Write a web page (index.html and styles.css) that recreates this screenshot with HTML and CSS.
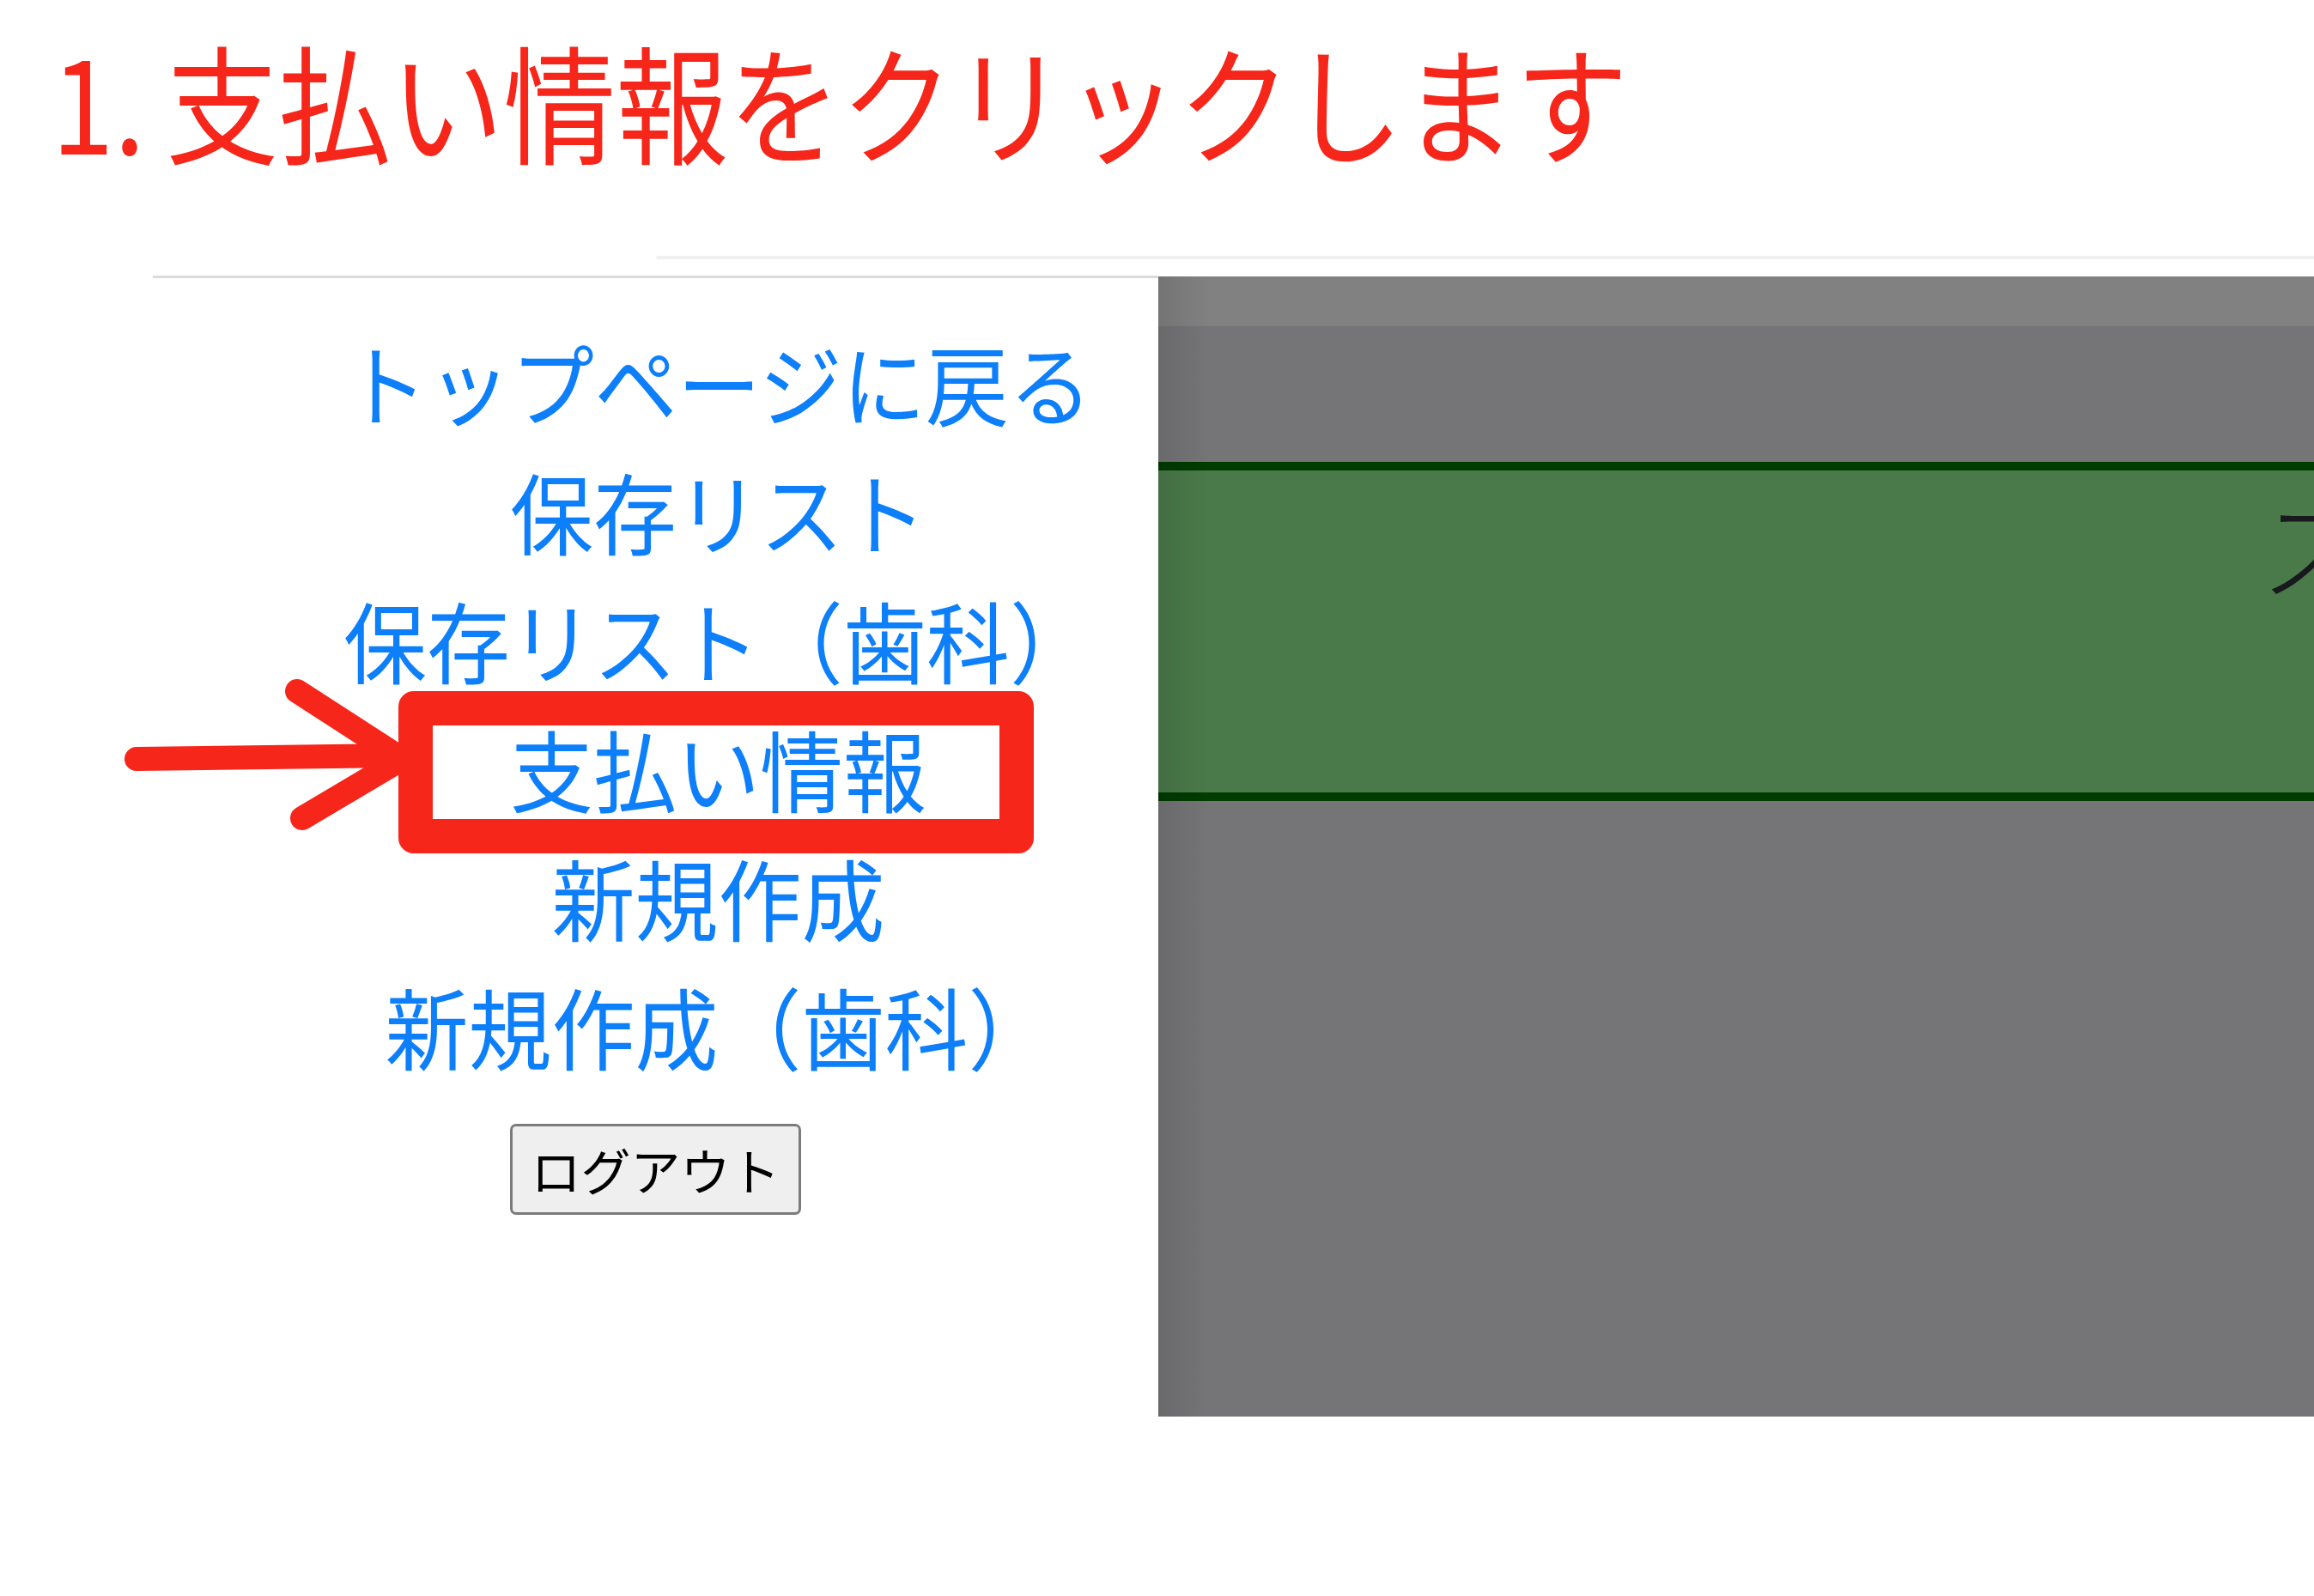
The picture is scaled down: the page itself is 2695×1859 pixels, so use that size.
FILE: index.html
```html
<!DOCTYPE html>
<html lang="ja">
<head>
<meta charset="utf-8">
<title>支払い情報</title>
<link rel="stylesheet" href="styles.css">
</head>
<body>
<h1 class="title"><span class="title-text"><span class="num">1.</span>支払い情報をクリックします</span></h1>
<div class="rule-top"></div>
<div class="app">
  <aside class="sidebar">
    <ul class="nav">
      <li><a href="#"><span class="link-text">トップページに戻る</span></a></li>
      <li><a href="#"><span class="link-text">保存リスト</span></a></li>
      <li><a href="#"><span class="link-text">保存リスト（歯科）</span></a></li>
      <li><a href="#"><span class="link-text">支払い情報</span></a></li>
      <li><a href="#"><span class="link-text">新規作成</span></a></li>
      <li><a href="#"><span class="link-text">新規作成（歯科）</span></a></li>
    </ul>
    <div class="logout"><button class="logout-btn" type="button">ログアウト</button></div>
  </aside>
  <main class="panel">
    <div class="panel-head"></div>
    <div class="panel-gap"></div>
    <div class="banner"><span class="banner-text">スケジュール</span></div>
    <div class="panel-rest"></div>
  </main>
</div>
<div class="callout"></div>
<svg class="arrow" width="350" height="200" viewBox="0 0 350 200" xmlns="http://www.w3.org/2000/svg">
  <g stroke="#f7261a" stroke-width="28" stroke-linecap="round" stroke-linejoin="round" fill="none">
    <path d="M29 104 L335 100"/>
    <path d="M216 25 L335 102"/>
    <path d="M222 173 L335 106"/>
  </g>
</svg>
</body>
</html>
```
FILE: styles.css
```css
html, body {
  margin: 0;
  padding: 0;
}
body {
  width: 2695px;
  height: 1859px;
  overflow: hidden;
  position: relative;
  background: #ffffff;
  font-family: "Noto Sans CJK JP", "Noto Sans", sans-serif;
}
.title {
  margin: 0;
  padding: 41px 0 0 60px;
  height: 131px;
  font-size: 131px;
  line-height: 131px;
  font-weight: 400;
  color: #f7261a;
  white-space: nowrap;
}
.title-text {
  display: inline-block;
  transform: scaleY(1.14);
  transform-origin: left top;
}
.num {
  margin-right: 24px;
}
.rule-top {
  margin: 126px 0 0 764px;
  height: 4px;
  background: #eef0f1;
  border-radius: 2px 0 0 2px;
}
.app {
  display: flex;
  align-items: flex-start;
  margin: 19px 0 0 178px;
}
.sidebar {
  width: 1171px;
  flex: none;
  border-top: 3px solid #dadada;
  padding-top: 45px;
}
.nav {
  list-style: none;
  margin: 0;
  padding: 0 0 0 146px;
  text-align: center;
}
.nav li {
  height: 150px;
  font-size: 97px;
  line-height: 150px;
  white-space: nowrap;
}
.nav a {
  color: #0d7ffa;
  text-decoration: none;
}
.link-text {
  display: inline-block;
  transform: scaleY(1.07);
}
.logout {
  text-align: center;
  margin-top: 40px;
}
.logout-btn {
  width: 339px;
  height: 106px;
  box-sizing: border-box;
  border: 3px solid #7b7b7b;
  border-radius: 7px;
  background: #efefef;
  color: #000;
  font-family: "Noto Sans CJK JP", sans-serif;
  font-size: 58px;
  line-height: 1;
  padding: 0;
}
.panel {
  position: relative;
  flex: none;
  width: 1346px;
  height: 1328px;
  margin-top: 1px;
  display: flex;
  flex-direction: column;
  background: #757577;
  overflow: hidden;
}
.panel::before {
  content: "";
  position: absolute;
  left: 0;
  top: 0;
  bottom: 0;
  width: 60px;
  background: linear-gradient(to right, rgba(0, 0, 0, 0.1), rgba(0, 0, 0, 0));
  pointer-events: none;
}
.panel-head {
  height: 58px;
  background: #818181;
}
.panel-gap {
  height: 158px;
}
.banner {
  height: 375px;
  border-top: 10px solid #003b00;
  border-bottom: 10px solid #003b00;
  background: #4a7a4a;
  padding-left: 1282px;
  white-space: nowrap;
  overflow: hidden;
}
.banner-text {
  display: inline-block;
  font-size: 130px;
  line-height: 130px;
  margin-top: 20px;
  color: #17191c;
  font-weight: 300;
}
.panel-rest {
  flex: 1;
}
.callout {
  position: absolute;
  left: 464px;
  top: 805px;
  width: 740px;
  height: 189px;
  box-sizing: border-box;
  border: 40px solid #f7261a;
  border-radius: 18px;
}
.arrow {
  position: absolute;
  left: 130px;
  top: 780px;
}
```
